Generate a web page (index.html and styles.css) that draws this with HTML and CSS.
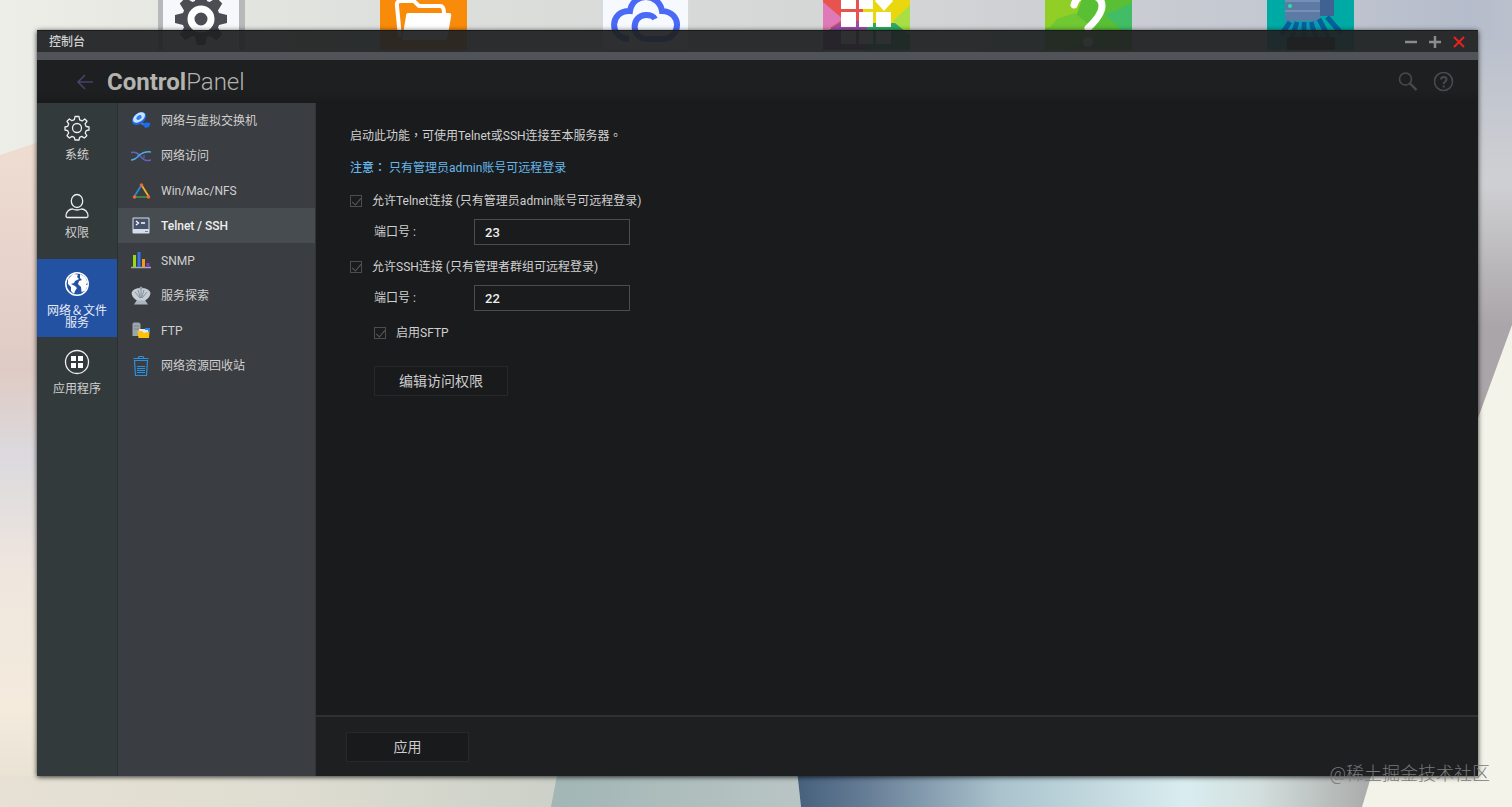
FILE: index.html
```html
<!DOCTYPE html>
<html lang="zh-Hant">

<head>
    <meta charset="utf-8">
    <meta name="viewport" content="width=device-width">
    <title>控制台</title>
    <link rel="stylesheet" href="styles.css">
</head>

<body>
    <svg class="wallpaper" viewBox="0 0 1512 807" preserveAspectRatio="none" aria-hidden="true">
        <defs>
            <linearGradient id="sky" x1="0" y1="0" x2="1" y2="0">
                <stop offset="0" stop-color="#edeee7" />
                <stop offset="0.25" stop-color="#dee0dd" />
                <stop offset="0.6" stop-color="#d3d5d6" />
                <stop offset="0.85" stop-color="#c3c7d0" />
                <stop offset="0.97" stop-color="#b5bccb" />
                <stop offset="1" stop-color="#bac0cc" />
            </linearGradient>
            <linearGradient id="left" x1="0" y1="0" x2="0" y2="1">
                <stop offset="0" stop-color="#f0ddd2" />
                <stop offset="0.35" stop-color="#dfcbc5" />
                <stop offset="0.48" stop-color="#dcdade" />
                <stop offset="0.65" stop-color="#efe6de" />
                <stop offset="0.85" stop-color="#f4ebdd" />
                <stop offset="1" stop-color="#e5e0d1" />
            </linearGradient>
            <linearGradient id="floor" x1="0" y1="0" x2="1" y2="0">
                <stop offset="0" stop-color="#e6e1d4" />
                <stop offset="0.5" stop-color="#dfddd1" />
                <stop offset="1" stop-color="#cbd0c8" />
            </linearGradient>
            <linearGradient id="teal" x1="0" y1="0" x2="1" y2="0">
                <stop offset="0" stop-color="#a1b6b5" />
                <stop offset="1" stop-color="#b9c5c4" />
            </linearGradient>
            <linearGradient id="blue" x1="0" y1="0" x2="1" y2="0">
                <stop offset="0" stop-color="#46607d" />
                <stop offset="0.12" stop-color="#667d96" />
                <stop offset="0.35" stop-color="#a9c2cc" />
                <stop offset="0.67" stop-color="#d9edf0" />
                <stop offset="0.8" stop-color="#d3dfdd" />
                <stop offset="1" stop-color="#a9aaa9" />
            </linearGradient>
            <linearGradient id="wall" x1="0" y1="0" x2="0" y2="1">
                <stop offset="0" stop-color="#bac0cc" />
                <stop offset="0.35" stop-color="#cfd0d3" />
                <stop offset="0.7" stop-color="#aaa5a8" />
                <stop offset="1" stop-color="#aaa5a8" />
            </linearGradient>
        </defs>
        <rect width="1512" height="807" fill="url(#sky)" />
        <path d="M0 155L60 135V807H0z" fill="url(#left)" />
        <path d="M0 776H570V807H0z" fill="url(#floor)" />
        <path d="M1470 40H1512V450H1470z" fill="url(#wall)" />
        <path d="M1512 325L1470 440V770H1370L1358 807H1512z" fill="#f3f3e9" />
        <path d="M558 770H797L801 807H551z" fill="url(#teal)" />
        <path d="M797 770H1373L1362 807H801z" fill="url(#blue)" />
    </svg>

    <div class="desktop-icons" aria-hidden="true">
        <svg class="app" viewBox="0 0 87 87">
            <rect width="87" height="87" fill="#b6b8b9" />
            <rect x="5" width="76" height="87" fill="#f7f8fb" />
            <g fill="#4b4d53" transform="translate(43 56)">
                <path d="M-4 -26H4L7 -14H-7zM-4 26H4L7 14H-7z" />
                <path d="M-4 -26H4L7 -14H-7zM-4 26H4L7 14H-7z" transform="rotate(45)" />
                <path d="M-4 -26H4L7 -14H-7zM-4 26H4L7 14H-7z" transform="rotate(90)" />
                <path d="M-4 -26H4L7 -14H-7zM-4 26H4L7 14H-7z" transform="rotate(135)" />
                <circle r="19" />
                <circle r="10" fill="none" stroke="#fff" stroke-width="7" />
            </g>
        </svg>
        <svg class="app" viewBox="0 0 87 87">
            <rect width="87" height="87" fill="#f98b0b" />
            <path d="M20 74L17 43Q16 38 21 38H34L39 43H60Q64 43 64 50" fill="none" stroke="#fff" stroke-width="4" />
            <path d="M28 50H69Q72 50 71 54L67 77H22L26 53Q26 50 28 50z" fill="#fff" />
        </svg>
        <svg class="app" viewBox="0 0 87 87">
            <rect width="87" height="87" fill="#f6faff" stroke="#b7bdc6" />
            <path d="M27 76C6 75 8 47 28 48C31 29 57 30 60 48C81 49 79 76 60 76H46C28 76 29 52 44 52Q51 52 53 56" fill="none" stroke="#4a69f6" stroke-width="6" />
        </svg>
        <svg class="app" viewBox="0 0 87 87">
            <rect width="87" height="87" fill="#e8d80d" />
            <path d="M0 0H40V65H0z" fill="#e8534f" />
            <path d="M0 39L20 56L0 70z" fill="#df79b8" />
            <path d="M0 70L20 58H44V87H0z" fill="#9b4fa5" />
            <path d="M87 42L70 58L87 72z" fill="#a7df45" />
            <path d="M44 60H72L87 72V87H44z" fill="#2eaa63" />
            <path d="M18 30H33V46H18zM36 30H50V46H36zM18 49H33V64H18zM36 49H50V64H36zM53 49H68V64H53zM18 67H33V81H18zM36 67H50V81H36zM53 67H68V81H53zM61 29L70 38L61 48L52 38z" fill="#fff" />
        </svg>
        <svg class="app" viewBox="0 0 87 87">
            <rect width="87" height="87" fill="#59bf35" />
            <path d="M0 0H50L30 56L0 66z" fill="#91cf27" />
            <path d="M12 56L30 50L54 70L20 87H0V70z" fill="#70c832" />
            <path d="M87 40L60 52L87 76z" fill="#42bd66" />
            <path d="M29 42Q32 31 44 32Q57 33 57 43Q57 52 43 65" fill="none" stroke="#fff" stroke-width="7" stroke-linecap="round" />
            <circle cx="43" cy="79" r="5" fill="#fff" />
        </svg>
        <svg class="app" viewBox="0 0 87 87">
            <rect width="87" height="87" fill="#00aaa4" />
            <path d="M18 20H53V58H18z" fill="#5d7aa5" />
            <path d="M53 20H67V53H53z" fill="#3f6292" />
            <path d="M18 38H53M18 48H53" stroke="#90a4c4" stroke-width="1" />
            <circle cx="23" cy="43" r="2" fill="#2fe09b" />
            <path d="M23 59L14 72M30 59L24 78M37 59V78M44 59L50 78M52 56L62 75M60 54L74 70" stroke="#075f9c" stroke-width="5" />
            <path d="M27 59L20 70M34 59L31 76M41 59L43 76M48 58L56 76" stroke="#1592c0" stroke-width="2" />
            <rect x="20" y="74" width="48" height="13" fill="#111" />
        </svg>
    </div>

    <main class="window">
        <header class="title-bar">
            <span class="title-text">控制台</span>
            <button class="win-btn" type="button" aria-label="最小化">
                <svg viewBox="0 0 12 12"><path d="M0 6H12" stroke="#8b8c8d" stroke-width="2.500" /></svg>
            </button>
            <button class="win-btn" type="button" aria-label="最大化">
                <svg viewBox="0 0 12 12"><path d="M0 6H12M6 0V12" stroke="#8b8c8d" stroke-width="2.500" /></svg>
            </button>
            <button class="win-btn" type="button" aria-label="关闭">
                <svg viewBox="0 0 12 12"><path d="M1 1L11 11M11 1L1 11" stroke="#e8221f" stroke-width="2" /></svg>
            </button>
        </header>

        <div class="app-bar">
            <button class="icon-btn back" type="button" aria-label="返回">
                <svg viewBox="0 0 20 20"><path d="M18 10H3M10 3L3 10L10 17" stroke="#45436b" stroke-width="1.600" fill="none" /></svg>
            </button>
            <h1><b>Control</b>Panel</h1>
            <button class="icon-btn" type="button" aria-label="搜索">
                <svg viewBox="0 0 20 20"><circle cx="7.500" cy="7" r="6" stroke="#494a4d" stroke-width="1.600" fill="none" /><path d="M12 11.500L18.500 18" stroke="#494a4d" stroke-width="2.400" /></svg>
            </button>
            <button class="icon-btn" type="button" aria-label="帮助">
                <svg viewBox="0 0 20 20" fill="none" stroke="#494a4d" stroke-width="1.600"><circle cx="9.500" cy="9.500" r="9" /><path d="M7 7.500C7 4 12.500 4 12.500 7.500C12.500 9.500 9.700 9.500 9.700 12M9.700 13.500V15.500" stroke-width="2" /></svg>
            </button>
        </div>

        <div class="window-body">
            <nav class="sidebar">
                <a class="side-item" href="#system">
                    <svg viewBox="0 0 26 26" fill="none" stroke="#eee" stroke-width="1.3" stroke-linejoin="round">
                        <circle cx="13" cy="13" r="4.5" />
                        <path d="M11 1.5H15L15.600 4.800L18.200 5.900L20.800 4L23 6.300L21.100 8.900L22.200 11.500L25 12V15L22.200 15.700L21.200 18L22.800 20.700L20.300 23L17.800 21.400L15.600 22.300L15 25H11L10.300 22.300L8 21.400L5.400 23L3 20.700L4.700 18L3.700 15.700L1 15V12L3.700 11.300L4.700 8.900L3 6.300L5.400 4L8 5.700L10.400 4.600z" />
                    </svg>
                    <span>系统</span>
                </a>
                <a class="side-item" href="#privilege">
                    <svg viewBox="0 0 26 26" fill="none" stroke="#eee" stroke-width="1.3">
                        <ellipse cx="13" cy="8" rx="5.7" ry="6.5" />
                        <path d="M8.5 16Q13 18 17.500 16C21 16 24 19 24 23Q24 24.500 22.500 24.500H3.500Q2 24.500 2 23C2 19 5 16 8.500 16z" />
                    </svg>
                    <span>权限</span>
                </a>
                <a class="side-item active" href="#network">
                    <svg viewBox="0 0 26 26">
                        <circle cx="13" cy="13" r="11.200" fill="none" stroke="#fff" stroke-width="1.500" />
                        <path d="M4 8L9 3L14 3.500L13 6L15 8L11 10L10 12L7 13L11 15L13 17L11 20L10 23L7 20L7 16L4 13z" fill="#fff" />
                        <path d="M16 3L21 6L23.500 11L22 14L24 14L21 20L17.500 21L17 16L14 13L15 10L18 9L16 7z" fill="#fff" />
                    </svg>
                    <span>网络＆文件服务</span>
                </a>
                <a class="side-item" href="#apps">
                    <svg viewBox="0 0 26 26">
                        <circle cx="13" cy="13" r="11.500" fill="none" stroke="#eee" stroke-width="1.300" />
                        <path d="M7 7H12V12H7zM14 7H19V12H14zM7 14H12V19H7zM14 14H19V19H14z" fill="#fff" />
                    </svg>
                    <span>应用程序</span>
                </a>
            </nav>

            <nav class="submenu">
                <a class="menu-item" href="#vswitch">
                    <svg viewBox="0 0 20 20">
                        <path d="M10 12L16 15" stroke="#3d7bec" stroke-width="2" />
                        <ellipse cx="8" cy="7.500" rx="8" ry="5.500" fill="#1d66e5" transform="rotate(-38 8 7.500)" />
                        <ellipse cx="8" cy="6.500" rx="6.800" ry="4.200" fill="#c8e1ff" transform="rotate(-38 8 6.500)" />
                        <ellipse cx="8" cy="6.500" rx="3" ry="2" fill="#2f7df2" transform="rotate(-38 8 6.500)" />
                        <path d="M12 13L15 11.500L19.500 12L18 16L14 17z" fill="#1c6cf2" />
                    </svg>
                    <span>网络与虚拟交换机</span>
                </a>
                <a class="menu-item" href="#access">
                    <svg viewBox="0 0 20 20" fill="none" stroke-width="1.500">
                        <path d="M0 6.500C6 5 8 9 11 12S16 15 20 14" stroke="#6263c5" />
                        <path d="M0 14C5 14 7 10 9 8.500S15 5 20 6" stroke="#4faeea" />
                        <path d="M7 9V12M13 9V12" stroke="#5578ce" stroke-width="1" />
                    </svg>
                    <span>网络访问</span>
                </a>
                <a class="menu-item" href="#winmac">
                    <svg viewBox="0 0 20 20">
                        <path d="M3 16L10.500 4" stroke="#288bd6" stroke-width="1.800" />
                        <path d="M10.500 4L18 16" stroke="#f0b52b" stroke-width="1.800" />
                        <path d="M3 16H18" stroke="#419b46" stroke-width="1.500" />
                        <g fill="#f0653b"><circle cx="10.500" cy="4" r="1.800" /><circle cx="3.500" cy="16" r="1.800" /><circle cx="17.500" cy="16" r="1.800" /></g>
                    </svg>
                    <span>Win/Mac/NFS</span>
                </a>
                <a class="menu-item active" href="#telnet">
                    <svg viewBox="0 0 20 20">
                        <rect x="1.500" y="1.500" width="17" height="16" rx="1" fill="#d8dee9" />
                        <rect x="2.500" y="2.500" width="15" height="10.500" fill="#47536b" />
                        <path d="M5 5L7.500 7L5 9M10 7H14" fill="none" stroke="#fff" stroke-width="1.300" />
                        <path d="M14 15.500H17" stroke="#7b8492" />
                    </svg>
                    <span>Telnet / SSH</span>
                </a>
                <a class="menu-item" href="#snmp">
                    <svg viewBox="0 0 20 20">
                        <path d="M0 16.500H20" stroke="#a6abb0" stroke-width="1.500" />
                        <path d="M3.500 4V16" stroke="#99db13" stroke-width="3" />
                        <path d="M8 1V16" stroke="#3b72e8" stroke-width="3" />
                        <path d="M12.500 8V16" stroke="#f19b18" stroke-width="3" />
                        <path d="M17 12V16" stroke="#8438d4" stroke-width="3" />
                    </svg>
                    <span>SNMP</span>
                </a>
                <a class="menu-item" href="#discovery">
                    <svg viewBox="0 0 20 20">
                        <path d="M6 14H14L17 18.500H3z" fill="#aab5bf" />
                        <path d="M0.500 7Q2 2 10 2Q18 2 19.500 7Q19 12 14 14.500H6Q1 12 0.500 7z" fill="#c5ced5" />
                        <path d="M9 12L4 6M9.500 12L7 4M10.500 12L13 4M11 12L16 6M10 12V1" stroke="#77828c" stroke-width="0.800" />
                        <circle cx="10" cy="2" r="1.500" fill="#919da7" />
                    </svg>
                    <span>服务探索</span>
                </a>
                <a class="menu-item" href="#ftp">
                    <svg viewBox="0 0 20 20">
                        <path d="M1.500 3Q1.500 1.500 3 1.500H8L9.500 3V15H1.500z" fill="#9da5ac" />
                        <path d="M3 5H8M3 8H8" stroke="#7d858c" />
                        <path d="M8 11V8H17V16H8z" fill="#e2eaf1" />
                        <path d="M14 8H18V11" fill="none" stroke="#2987ec" stroke-width="2" />
                        <path d="M6.500 10H11L13 12L18.500 10.500L18 17H7.500z" fill="#fdc10a" />
                    </svg>
                    <span>FTP</span>
                </a>
                <a class="menu-item" href="#recycle">
                    <svg viewBox="0 0 20 20" fill="none" stroke="#2b91df" stroke-width="1">
                        <path d="M2.500 2.500H17.500M7 2.500L8 0.500H12L13 2.500M3.500 4.500H16.500L15.500 19.500H4.500z" stroke-width="1.200" />
                        <path d="M6 10.500H14M6 12.500H14M6 14.500H14M6 16.500H14" />
                    </svg>
                    <span>网络资源回收站</span>
                </a>
            </nav>

            <form class="content">
                <div class="settings">
                    <p class="intro">启动此功能，可使用Telnet或SSH连接至本服务器。</p>
                    <p class="note"><b>注意：</b> 只有管理员admin账号可远程登录</p>

                    <label class="check">
                        <input type="checkbox" checked>
                        <span>允许Telnet连接 (只有管理员admin账号可远程登录)</span>
                    </label>
                    <div class="field">
                        <label for="telnet-port">端口号 :</label>
                        <input id="telnet-port" type="text" value="23">
                    </div>

                    <label class="check">
                        <input type="checkbox" checked>
                        <span>允许SSH连接 (只有管理者群组可远程登录)</span>
                    </label>
                    <div class="field">
                        <label for="ssh-port">端口号 :</label>
                        <input id="ssh-port" type="text" value="22">
                    </div>
                    <label class="check sub">
                        <input type="checkbox" checked>
                        <span>启用SFTP</span>
                    </label>

                    <button class="btn btn-edit" type="button">编辑访问权限</button>
                </div>
                <footer class="actions">
                    <button class="btn btn-apply" type="button">应用</button>
                </footer>
            </form>
        </div>
    </main>

    <div class="watermark">@稀土掘金技术社区</div>
</body>

</html>
```
FILE: styles.css
```css
* {
    box-sizing: border-box;
}

body {
    position: relative;
    display: flex;
    min-height: 100vh;
    margin: 0;
    padding: 30px 34px 31px 37px;
    overflow-x: hidden;
    color: #d0d0d0;
    font: 12px/20px Roboto, "Noto Sans CJK TC", sans-serif;
}

a {
    color: inherit;
    text-decoration: none;
}

p,
h1 {
    margin: 0;
}

button,
input {
    font-family: inherit;
    margin: 0;
}

/* desktop */
.wallpaper {
    position: absolute;
    top: 0;
    left: 0;
    width: 100%;
    height: 100%;
}

.desktop-icons {
    position: absolute;
    top: 0;
    left: 158px;
    right: 158px;
    height: 50px;
    display: flex;
    justify-content: space-between;
    align-items: flex-end;
    overflow: hidden;
}

.app {
    flex: none;
    width: 87px;
    height: 87px;
}

/* window */
.window {
    position: relative;
    flex: 1;
    display: flex;
    flex-direction: column;
    box-shadow: 0 1px 5px rgba(0, 0, 0, 0.8);
}

.title-bar {
    display: flex;
    align-items: center;
    height: 30px;
    padding: 0 13px 0 12px;
    background: rgba(32, 34, 35, 0.94);
    border-top: 1px solid #191b1b;
    border-bottom: 8px solid #505357;
}

.title-text {
    flex: 1;
    font-weight: 500;
}

.win-btn {
    display: flex;
    margin-left: 12px;
    padding: 0;
    border: 0;
    background: none;
}

.win-btn svg {
    width: 12px;
    height: 12px;
}

.app-bar {
    display: flex;
    align-items: center;
    height: 43px;
    padding: 0 24px 0 38px;
    background: linear-gradient(#1d1f21 70%, #191b1b);
}

.icon-btn {
    display: flex;
    margin-left: 16px;
    padding: 0;
    border: 0;
    background: none;
}

.icon-btn svg {
    width: 20px;
    height: 20px;
}

.icon-btn.back {
    margin: 0 12px 0 0;
}

.app-bar h1 {
    flex: 1;
    font-size: 24px;
    font-weight: 300;
    line-height: 32px;
    color: #b5b3b0;
}

.app-bar b {
    font-weight: 700;
}

.window-body {
    flex: 1;
    display: flex;
}

/* left side */
.sidebar {
    width: 80px;
    background: #333a3c;
}

.side-item {
    display: flex;
    flex-direction: column;
    align-items: center;
    height: 78px;
    padding: 12px 8px 0;
    line-height: 12px;
    text-align: center;
}

.side-item svg {
    flex: none;
    width: 26px;
    height: 26px;
    margin-bottom: 8px;
}

.side-item.active {
    background: #2452a3;
    color: #e5ebf5;
}

.submenu {
    width: 199px;
    background: #3a3d41;
    border-left: 1px solid #2b3033;
    border-right: 1px solid #2f3436;
}

.menu-item {
    display: flex;
    align-items: center;
    gap: 10px;
    height: 35px;
    padding-left: 13px;
}

.menu-item svg {
    width: 20px;
    height: 20px;
}

.menu-item.active {
    background: #464c4f;
    color: #eee;
    font-weight: 500;
}

/* content */
.content {
    flex: 1;
    display: flex;
    flex-direction: column;
    background: #1a1b1d;
}

.settings {
    flex: 1;
    padding: 23px 34px;
}

.intro {
    margin-bottom: 12px;
}

.note {
    margin-bottom: 13px;
    color: #67b7e9;
}

.note b {
    font-weight: 500;
}

.check {
    display: flex;
    align-items: center;
    gap: 10px;
}

.check input {
    appearance: none;
    display: flex;
    justify-content: center;
    width: 12px;
    height: 12px;
    border: 1px solid #4c4d4f;
}

.check input:checked::before {
    content: "";
    width: 4px;
    height: 8px;
    border: solid #5a5b5d;
    border-width: 0 1px 1px 0;
    transform: rotate(40deg);
}

.field {
    display: flex;
    align-items: center;
    margin: 8px 0 12px 24px;
}

.field label {
    width: 100px;
}

.field input {
    width: 156px;
    height: 26px;
    padding: 0 10px;
    border: 1px solid #4b4c4e;
    background: transparent;
    color: #eee;
    font-size: 13px;
    font-weight: 500;
}

.check.sub {
    margin-left: 24px;
}

.btn {
    display: block;
    height: 30px;
    padding: 0 0 2px;
    border: 1px solid #262829;
    background: #191a1c;
    color: #ccc;
    font-size: 14px;
}

.btn-edit {
    width: 134px;
    margin: 23px 0 0 24px;
}

.btn-apply {
    width: 123px;
}

.actions {
    display: flex;
    align-items: center;
    height: 61px;
    padding: 0 30px;
    background: #1e1f21;
    border-top: 2px solid #303133;
}

.watermark {
    position: absolute;
    right: 22px;
    bottom: 20px;
    color: #77797a;
    font-size: 18px;
    font-weight: 300;
    line-height: 26px;
}
```
